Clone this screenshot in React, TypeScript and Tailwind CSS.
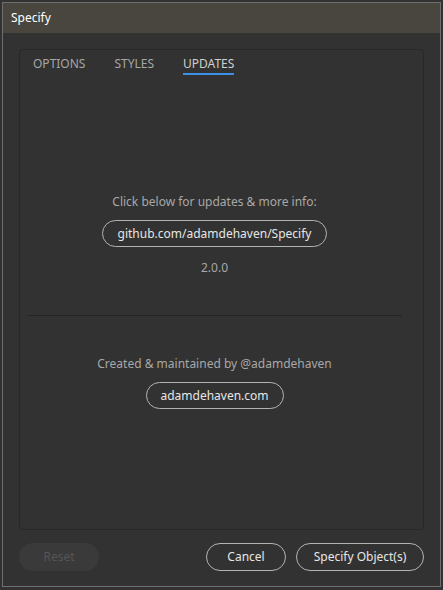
import React from 'react';

const font = { fontFamily: '"Noto Sans", "Open Sans", sans-serif' };

function PillButton({ label, className }: { label: string; className: string }) {
  return (
    <button
      className={`h-[27px] rounded-full border border-[#b4b4b4] text-[12px] text-[#e6e6e6] leading-none ${className}`}
    >
      {label}
    </button>
  );
}

export default function App() {
  const tabs = ['OPTIONS', 'STYLES', 'UPDATES'];
  const active = 'UPDATES';

  return (
    <div className="w-[443px] h-[590px] bg-[#323232] p-[2px] pb-[3px]" style={font}>
      <div className="h-full border border-[#6e6e6e] flex flex-col">
        {/* title bar */}
        <div className="h-[30px] bg-[#48463f] pl-[8px] flex items-center text-[12px] text-white">
          Specify
        </div>

        {/* tab panel */}
        <div className="mx-[16px] mt-[16px] h-[481px] rounded-[4px] border border-[#282828] flex flex-col">
          <div className="flex gap-[29px] pl-[13px] pt-[6px]">
            {tabs.map((t) => (
              <div key={t} className="flex flex-col">
                <span
                  className={`text-[12px] leading-[16px] ${
                    t === active ? 'text-[#cfcfcf]' : 'text-[#a6a6a6]'
                  }`}
                >
                  {t}
                </span>
                <div className={`mt-[1px] h-[2px] ${t === active ? 'bg-[#3b8fe6]' : ''}`} />
              </div>
            ))}
          </div>

          <div className="ml-[7px] mr-[21px] flex flex-col items-center">
            <p className="mt-[119px] text-[12px] leading-[16px] text-[#a8a8a8]">
              Click below for updates &amp; more info:
            </p>
            <PillButton label="github.com/adamdehaven/Specify" className="mt-[10px] w-[225px]" />
            <p className="mt-[13px] text-[12px] leading-[16px] text-[#a8a8a8]">2.0.0</p>

            <div className="mt-[39px] h-[1px] w-full bg-[#262626]" />

            <p className="mt-[40px] text-[12px] leading-[16px] text-[#a8a8a8]">
              Created &amp; maintained by @adamdehaven
            </p>
            <PillButton label="adamdehaven.com" className="mt-[10px] w-[138px]" />
          </div>
        </div>

        {/* footer buttons */}
        <div className="mt-[13px] px-[16px] flex items-center">
          <button className="h-[28px] w-[80px] rounded-full bg-[#3a3a3a] text-[12px] text-[#555555]">
            Reset
          </button>
          <div className="ml-auto flex gap-[10px]">
            <button className="h-[28px] w-[80px] rounded-full border border-[#b4b4b4] text-[12px] text-[#e6e6e6]">
              Cancel
            </button>
            <button className="h-[28px] w-[128px] rounded-full border border-[#b4b4b4] text-[12px] text-[#e6e6e6]">
              Specify Object(s)
            </button>
          </div>
        </div>
      </div>
    </div>
  );
}
